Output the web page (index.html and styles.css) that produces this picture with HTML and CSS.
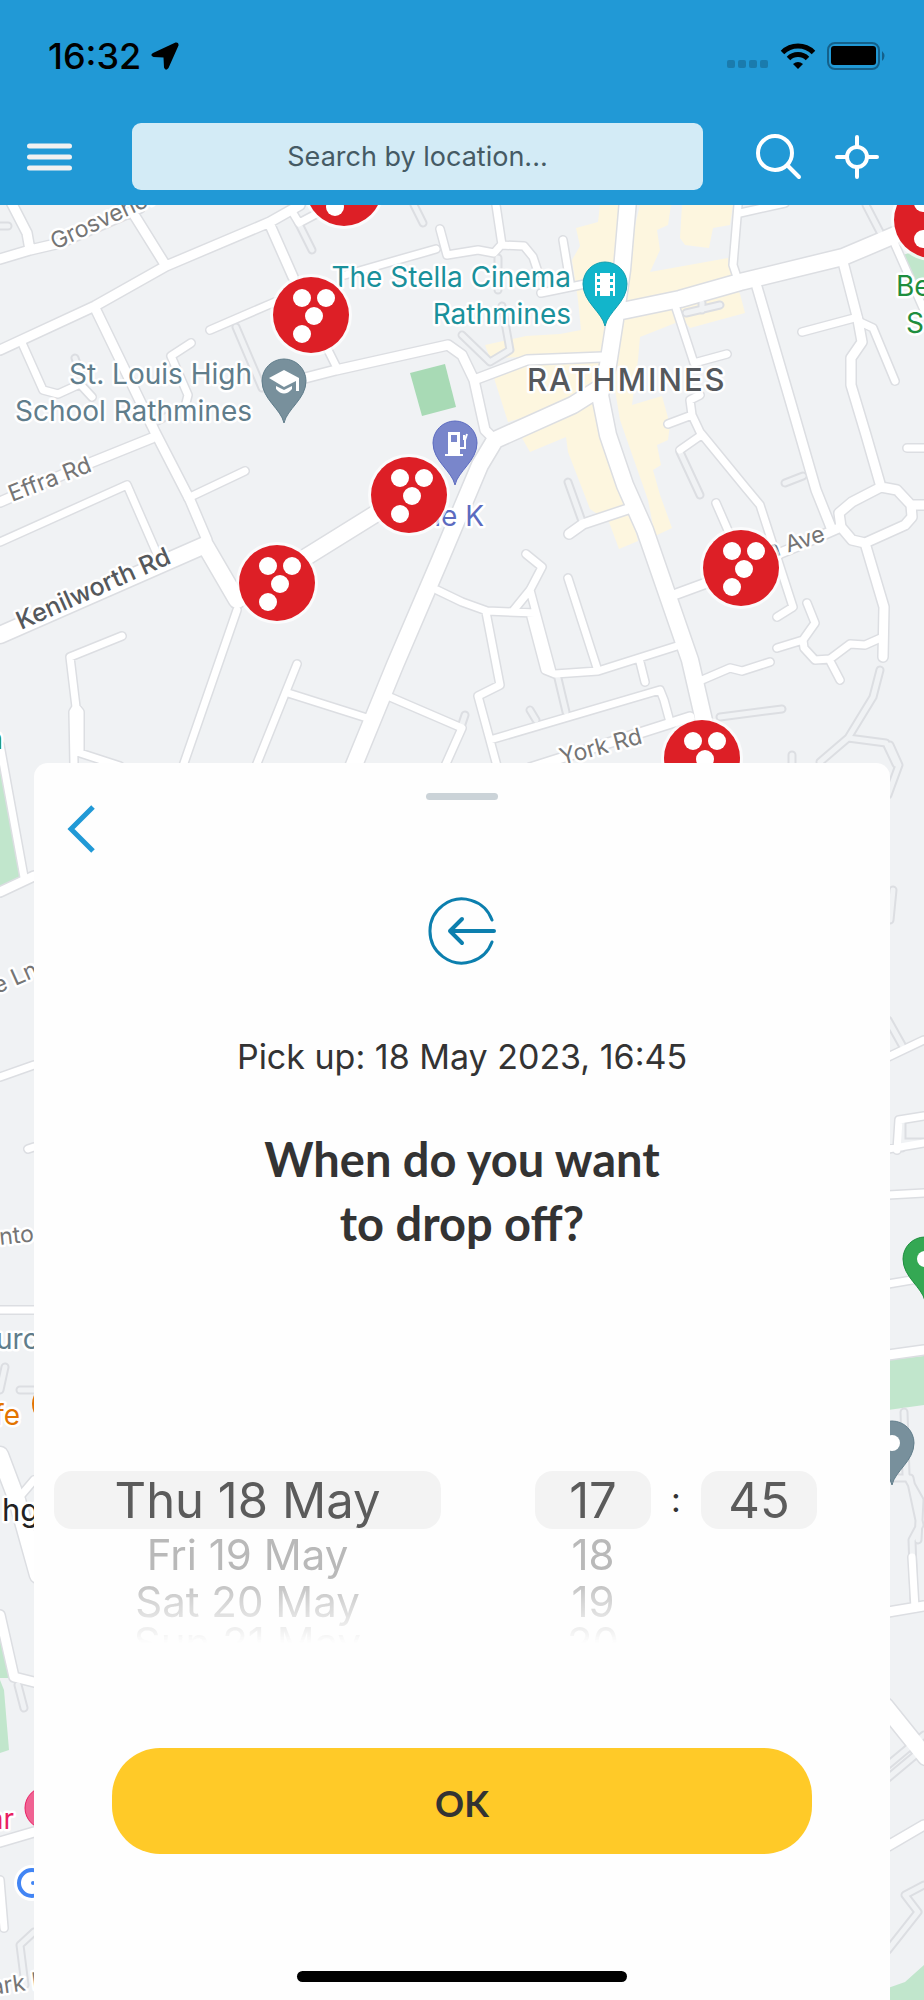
FILE: index.html
```html
<!DOCTYPE html>
<html lang="en">
<head>
    <meta charset="UTF-8">
    <meta name="viewport" content="width=device-width, initial-scale=1.0">
    <title>Drop off time</title>
    <link rel="stylesheet" href="styles.css">
</head>
<body>
    <header class="header">
        <div class="status">
            <span class="clock">16:32</span>
            <svg class="location" width="28" height="28" viewBox="0 0 28 28"><path d="M24.500.500 2 11Q-1.500 13.500 2.500 15L12.500 15.500 13 25.500Q14.500 29.500 17.500 26L27.500 3.500Q28 0 24.500.500z"/></svg>
            <svg class="signal" width="42" height="8" viewBox="0 0 42 8"><g fill="#1a7bad"><rect width="8" height="8" rx="2"/><rect x="11" width="8" height="8" rx="2"/><rect x="22" width="8" height="8" rx="2"/><rect x="33" width="8" height="8" rx="2"/></g></svg>
            <svg class="wifi" width="36" height="26" viewBox="0 0 36 26"><g fill="none" stroke="#000" stroke-width="5"><path d="M2.500 9.500a22 22 0 0 1 31 0"/><path d="M8.500 15.500a13.500 13.500 0 0 1 19 0"/></g><path d="M18 26l-5-5q5-4 10 0z"/></svg>
            <svg class="battery" width="59" height="28" viewBox="0 0 59 28"><rect x="1" y="1" width="51" height="26" rx="7" fill="none" stroke="#14608a" stroke-width="2"/><rect x="4" y="4" width="45" height="19" rx="3"/><path d="M55 9q5 5 0 10z" fill="#14608a"/></svg>
        </div>
        <div class="toolbar">
            <button type="button" class="icon-btn" aria-label="Menu">
                <svg width="45" height="28" viewBox="0 0 45 28"><path d="M2.500 3h40M2.500 14h40M2.500 25h40" stroke="#f1f1f1" stroke-width="5" stroke-linecap="round"/></svg>
            </button>
            <input type="text" class="search" placeholder="Search by location..." aria-label="Search by location">
            <button type="button" class="icon-btn" aria-label="Search">
                <svg width="46" height="46" viewBox="0 0 46 46"><g fill="none" stroke="#fff" stroke-width="4" stroke-linecap="round"><circle cx="19" cy="19" r="17"/><path d="M31.500 31.500 43 43"/></g></svg>
            </button>
            <button type="button" class="icon-btn" aria-label="My location">
                <svg width="46" height="46" viewBox="0 0 46 46"><g fill="none" stroke="#fff" stroke-width="4" stroke-linecap="round"><circle cx="23" cy="23" r="10"/><path d="M23 3v9M23 34v9M3 23h9M34 23h9"/></g></svg>
            </button>
        </div>
    </header>

    <main class="stage">
        <svg class="map" viewBox="0 205 924 1795" preserveAspectRatio="xMidYMin slice" role="img" aria-label="Map of Rathmines">
            <defs>
                <path id="pin" d="M0 42C-3 28-22 18-22 0A22 22 0 1 1 22 0C22 18 3 28 0 42z"/>
                <g id="station">
                    <circle r="41" fill="#fff" opacity=".7"/>
                    <circle r="38" fill="#dd1f26"/>
                    <g fill="#fff"><circle cx="-9" cy="-17" r="9"/><circle cx="15" cy="-17" r="9"/><circle cx="3" cy="1" r="9"/><circle cx="-9" cy="19" r="9"/></g>
                </g>
                <path id="lanes" d="M298 222 312 250M236 327 262 388M414 205 423 223M498 258V290M502 306 510 350 490 362 462 335M866 205 880 232M686 313 720 305M702 303V310M785 483 803 476M680 452 700 495M568 482 583 524M557 674 566 712M530 710 536 720M720 717 782 709M880 670 873 697 848 738 820 762M848 738 886 743 896 764M792 755V764M75 358 80 372M150 425 175 412M0 226H8M18 1685 24 1708M34 1932 20 1945 25 1985M5 1367 0 1390M20 1390H34M890 745 899 765 888 795M893 890 890 920M888 1020 902 1045M904 1412 906 1475 920 1500 918 1540M888 1478H910L920 1525 912 1540 914 1600M888 1765 924 1735M888 1778 924 1748M888 1950 918 1912 905 1895 924 1885M902 1122V1148M900 1142H924M465 715 460 730"/>
                <path id="streets" d="M22 343 43 390 58 394 80 384 92 397M191 343 171 356 188 395 186 403M210 330 275 302M293 213 299 223 318 213M345 275 436 249M440 229 447 255 478 250 494 253 501 245 524 246 533 257 538 272M496 205 502 245M541 293 585 284M563 240 570 282M328 350 338 370M188 498 245 471M0 542 127 485 158 556M122 636 70 657 76 707 73 712 74 764M76 707 80 712V753L120 766M237 610 183 766M297 664 256 766M288 693 367 718M390 697 462 728 445 766M437 590 462 602 487 611 535 613M526 554 542 567 530 590 513 611M530 590 552 672M530 613 545 670 555 674 598 671 677 646M568 578 598 671M640 662 645 682M486 612 500 685 478 696 497 766M490 740 660 690 664 700 670 722M702 680 730 668 742 671 770 662M716 503 730 535M807 603 815 623 803 640 804 648 815 660 830 659 850 644 865 645 883 637M777 648 803 640M829 659 840 680M858 317 802 332M860 322 873 328 895 381M893 240 924 310M676 308 694 363 727 354M700 395 690 400 692 415 700 432 745 487 760 505 793 607 777 617M692 415 668 424M700 436 680 450M740 213 785 203M738 205 733 265 738 280M907 448H924M24 877 0 745M0 1077 34 1065M28 1149 34 1147M0 1310H34M17 1500 34 1480M0 1880 4 1928M888 1057 924 1040M897 1150 899 1120 924 1116M888 1149 924 1143M888 1195 924 1193M888 1284 924 1278M912 1557 915 1608"/>
                <path id="roads" d="M10 200 27 233 30 250M0 259 30 250 60 243 140 208M133 213 166 266M0 350 95 306 166 266 270 222 300 205M95 308 155 432 190 500 207 540M270 225 293 277M0 502 85 465 152 438M305 378 336 370 448 345 462 355 474 380 485 430 492 437M474 380 527 360 603 357M757 287 790 400 816 490 832 530M843 262 858 320 862 342 851 358V385L866 435 881 487M839 513 852 502 881 487 897 490 911 505 912 517 905 525 865 543 852 540 841 527zM911 505H924M865 543 884 607 883 657M569 534 583 524 628 509M671 596 720 578 800 545 841 527M530 768 690 717M0 892 34 876M0 1615 14 1677 34 1682M0 1842 34 1832M888 1355 924 1350M888 1612 924 1606M888 1846 924 1825"/>
                <path id="avenues" d="M0 635 205 545 237 600 385 508M617 312 680 299 740 282 843 257 895 235 924 225M628 200 622 270 615 320 608 365 600 395 608 435 625 485 645 530 690 660 705 725M600 388 573 405 495 440 480 465 440 560 395 665 352 770M0 1455 17 1500 38 1575M885 1706 926 1757"/>
            </defs>

            <rect y="205" width="924" height="1795" fill="#f0f2f4"/>
            <!-- commercial blocks -->
            <path fill="#fdf6df" d="M600 205 598 222 576 228 580 246 572 260 578 300 581 330 560 334 526 336 485 345 490 358 560 356 603 357 640 205zM494 378 540 360 603 358 598 395 508 422zM522 438 598 400 612 440 638 541 619 549 609 522 590 509 568 452 566 437 530 452zM638 205H671L668 225 657 230 660 250 650 272 728 258 732 280 740 294 745 313 690 328 683 320 640 337 638 360 632 405 662 396 670 425 668 440 657 445 661 465 653 470 660 495 672 528 655 536 648 500 620 420 600 300zM682 205H733L730 225 713 228 709 248 685 245 680 238z"/>
            <!-- parks -->
            <path fill="#a8dab5" d="M410 373 445 364 456 407 422 416z"/>
            <path fill="#c1e6cc" d="M903 255 924 248V280H915zM0 765 20 877 0 886zM0 1635 9 1678 0 1678zM0 1680 4 1690 9 1750 0 1753zM888 1360 924 1356V1405L888 1410zM888 1988 905 1982 924 1965V2000H888z"/>

            <use href="#lanes" class="line casing lane"/>
            <use href="#streets" class="line casing street"/>
            <use href="#roads" class="line casing road"/>
            <use href="#avenues" class="line casing avenue"/>
            <use href="#lanes" class="line fill-lane"/>
            <use href="#streets" class="line fill-street"/>
            <use href="#roads" class="line fill-road"/>
            <use href="#avenues" class="line fill-avenue"/>

            <g class="labels">
                <text class="poi teal" x="571" y="287" text-anchor="end">The Stella Cinema</text>
                <text class="poi teal" x="571" y="324" text-anchor="end">Rathmines</text>
                <text class="poi slate" x="252" y="384" text-anchor="end">St. Louis High</text>
                <text class="poi slate" x="252" y="421" text-anchor="end">School Rathmines</text>
                <text class="poi green" x="896" y="296">Be</text>
                <text class="poi green" x="906" y="333">S</text>
                <text class="poi green" x="3" y="749" text-anchor="end">n</text>
                <text class="poi indigo" x="484" y="526" text-anchor="end">le K</text>
                <text class="district" x="527" y="391">RATHMINES</text>
                <text class="street-name" transform="translate(55 250) rotate(-25)">Grosvenor</text>
                <text class="street-name" transform="translate(12 502) rotate(-21)">Effra Rd</text>
                <text class="main-name" transform="translate(21 630) rotate(-24)">Kenilworth Rd</text>
                <text class="street-name" transform="translate(562 765) rotate(-15)">York Rd</text>
                <text class="street-name" transform="translate(769 559) rotate(-18)">n Ave</text>
                <text class="street-name" transform="translate(-3 994) rotate(-24)">e Ln</text>
                <text class="street-name" transform="translate(0 1245) rotate(-6)">nto</text>
                <text class="poi slate" x="-4" y="1349">urch</text>
                <text class="poi orange" x="20" y="1425" text-anchor="end">fe</text>
                <text class="town" x="2" y="1521">hg</text>
                <text class="poi pink" x="14" y="1829" text-anchor="end">ar</text>
                <text class="street-name" transform="translate(-8 1995) rotate(-8)">ark R</text>
            </g>

            <g transform="translate(605 284)">
                <use href="#pin" fill="#12b5cb" stroke="#129eaf"/>
                <path fill="#fff" d="M-10-11h2v3h3v-3H5v3h3v-3h2v23H8V9H5v3H-5V9h-3v3h-2z"/>
                <path stroke="#12b5cb" stroke-width="3" stroke-dasharray="3 3" d="M-6.500-5V9M6.500-5V9"/>
            </g>
            <g transform="translate(284 381)">
                <use href="#pin" fill="#78909c" stroke="#607d8b"/>
                <path fill="#fff" d="M0-11 15-3V10h-3V0L0 6-15-3zM-8 5 0 9 8 5V8Q0 17-8 8z"/>
            </g>
            <g transform="translate(455 443)">
                <use href="#pin" fill="#7986cb" stroke="#5c6bc0"/>
                <path fill="#fff" fill-rule="evenodd" d="M-7-11H5V11H8V13H-10V11H-7zM-4-8V-1H2V-8z"/>
                <path fill="none" stroke="#fff" stroke-width="2" d="M5 5h5V-3L12-9M9-8v5"/>
            </g>
            <g transform="translate(925 1259)">
                <use href="#pin" fill="#34a853" stroke="#1e8e3e"/>
                <circle r="8" fill="#fff"/>
            </g>
            <g transform="translate(892 1443)">
                <use href="#pin" fill="#78909c" stroke="#607d8b"/>
                <circle r="8" fill="#fff"/>
            </g>
            <circle cx="53" cy="1404" r="21" fill="#e37400"/>
            <circle cx="46" cy="1808" r="21" fill="#f06292" stroke="#e91e63"/>
            <circle cx="32" cy="1883" r="18" fill="#fff"/>
            <circle cx="32" cy="1883" r="13" fill="none" stroke="#4285f4" stroke-width="4"/>
            <circle cx="33" cy="1883" r="2" fill="#4285f4"/>

            <use href="#station" x="344" y="188"/>
            <use href="#station" x="311" y="315"/>
            <use href="#station" x="409" y="495"/>
            <use href="#station" x="277" y="583"/>
            <use href="#station" x="741" y="568"/>
            <use href="#station" x="702" y="758"/>
            <use href="#station" x="932" y="220"/>
        </svg>

        <form class="sheet">
            <div class="handle"></div>
            <button type="button" class="back" aria-label="Back">
                <svg width="28" height="48" viewBox="0 0 28 48"><path d="M26 2 4 24l22 22" fill="none" stroke="#2199d6" stroke-width="5"/></svg>
            </button>
            <svg class="return" width="68" height="68" viewBox="0 0 68 68"><g fill="none" stroke="#0c7fae" stroke-width="3" stroke-linecap="round" stroke-linejoin="round"><path d="M64 23a32 32 0 1 0 0 22"/><path d="M66 34H22M34 22 22 34l12 12" stroke-width="4"/></g></svg>
            <p class="pickup">Pick up: 18 May 2023, 16:45</p>
            <h1>When do you want<br>to drop off?</h1>

            <div class="picker">
                <div class="wheel date">
                    <select class="current" aria-label="Date">
                        <option>Thu 18 May</option>
                        <option>Fri 19 May</option>
                        <option>Sat 20 May</option>
                        <option>Sun 21 May</option>
                    </select>
                    <button type="button" class="next">Fri 19 May</button>
                    <button type="button" class="later">Sat 20 May</button>
                    <button type="button" class="last">Sun 21 May</button>
                </div>
                <div class="wheel hour">
                    <select class="current" aria-label="Hour">
                        <option>17</option>
                        <option>18</option>
                        <option>19</option>
                        <option>20</option>
                    </select>
                    <button type="button" class="next">18</button>
                    <button type="button" class="later">19</button>
                    <button type="button" class="last">20</button>
                </div>
                <span class="colon">:</span>
                <div class="wheel minute">
                    <select class="current" aria-label="Minute">
                        <option>45</option>
                    </select>
                </div>
            </div>

            <button type="submit" class="ok">OK</button>
            <div class="home-bar"></div>
        </form>
    </main>
</body>
</html>
```
FILE: styles.css
```css
* {
    box-sizing: border-box;
}
body {
    margin: 0;
    min-height: 100vh;
    display: flex;
    flex-direction: column;
    font-family: Inter, "Liberation Sans", sans-serif;
    color: #333;
    background-color: #f0f2f4;
}
button, input, select {
    font-family: inherit;
    color: inherit;
    border: none;
    padding: 0;
    margin: 0;
    background: none;
}
button {
    cursor: pointer;
}
svg {
    display: block;
}

/* header */
.header {
    background-color: #2199d6;
}
.status {
    display: flex;
    align-items: center;
    height: 108px;
    padding: 4px 38px 0 48px;
    color: #000;
}
.clock {
    font-size: 36px;
    font-weight: 500;
    line-height: 40px;
}
.location {
    margin-left: 10px;
}
.signal {
    margin-left: auto;
    margin-top: 16px;
}
.wifi {
    margin-left: 11px;
}
.battery {
    margin-left: 11px;
}
.toolbar {
    display: flex;
    align-items: center;
    height: 97px;
    padding: 0 44px 0 27px;
}
.search {
    flex: 1;
    min-width: 0;
    height: 67px;
    margin: 0 53px 0 60px;
    border-radius: 9px;
    background-color: #d3ebf6;
    font-size: 27px;
    text-align: center;
}
.search::placeholder {
    color: #455a64;
    opacity: 1;
}
.icon-btn + .icon-btn {
    margin-left: 32px;
}

/* map and sheet share one cell */
.stage {
    flex: 1;
    display: grid;
}
.map, .sheet {
    grid-area: 1 / 1;
}
.map {
    width: 100%;
    height: 100%;
}
.line {
    fill: none;
    stroke: #fff;
    stroke-linecap: round;
    stroke-linejoin: round;
}
.casing {
    stroke: #dcdee2;
}
.lane {
    stroke-width: 9px;
}
.street {
    stroke-width: 10px;
}
.road {
    stroke-width: 12px;
}
.avenue {
    stroke-width: 19px;
}
.fill-lane {
    stroke: #f0f2f4;
    stroke-width: 5px;
}
.fill-street {
    stroke-width: 7px;
}
.fill-road {
    stroke-width: 9px;
}
.fill-avenue {
    stroke-width: 16px;
}
.labels text {
    paint-order: stroke;
    stroke: #fff;
    stroke-width: 5px;
    stroke-linejoin: round;
}
.poi {
    font-size: 28px;
}
.teal {
    fill: #1a919b;
}
.slate {
    fill: #607d8b;
}
.green {
    fill: #1e8e3e;
}
.indigo {
    fill: #5c6bc0;
}
.orange {
    fill: #e37400;
}
.pink {
    fill: #e91e63;
}
.district {
    font-size: 31px;
    font-weight: 500;
    letter-spacing: 2px;
    fill: #55585c;
}
.street-name {
    font-size: 23px;
    fill: #757575;
}
.main-name {
    font-size: 25px;
    font-weight: 500;
    fill: #55585c;
}
.town {
    font-size: 31px;
    fill: #222;
}

/* bottom sheet */
.sheet {
    display: flex;
    flex-direction: column;
    align-items: center;
    margin: 558px 34px 0;
    padding-top: 30px;
    background-color: #fefefe;
    border-radius: 14px 14px 0 0;
}
.handle {
    width: 72px;
    height: 7px;
    border-radius: 4px;
    background-color: #cbd3d8;
}
.back {
    align-self: flex-start;
    margin: 5px 0 0 33px;
}
.return {
    margin-top: 44px;
}
.pickup {
    margin: 68px 0 0;
    font-size: 34px;
    line-height: 48px;
}
h1 {
    margin: 46px 0 0;
    font-family: Lato, sans-serif;
    font-size: 47px;
    font-weight: 700;
    line-height: 64px;
    text-align: center;
}
.picker {
    align-self: stretch;
    display: flex;
    align-items: flex-start;
    margin-top: 216px;
    padding: 0 73px 0 20px;
}
.wheel {
    display: flex;
    flex-direction: column;
    width: 116px;
    height: 172px;
    mask-image: linear-gradient(#000 60%, transparent);
}
.date {
    flex: 1;
    margin-right: 94px;
}
.current {
    appearance: none;
    width: 100%;
    height: 58px;
    border-radius: 18px;
    background-color: #f3f3f3;
    color: #5b5b5b;
    font-size: 49px;
    text-align: center;
    text-align-last: center;
}
.next, .later, .last {
    font-size: 42px;
    color: #b9b9b9;
}
.next {
    height: 52px;
    line-height: 52px;
}
.later {
    height: 42px;
    line-height: 42px;
}
.last {
    height: 20px;
    overflow: hidden;
    line-height: 40px;
}
.colon {
    width: 50px;
    line-height: 58px;
    font-size: 34px;
    text-align: center;
}
.ok {
    width: 700px;
    max-width: 82%;
    height: 106px;
    margin-top: 105px;
    padding-top: 4px;
    border-radius: 48px;
    background-color: #ffca28;
    font-family: Lato, sans-serif;
    font-size: 36px;
    font-weight: 700;
}
.home-bar {
    width: 330px;
    height: 11px;
    margin: auto 0 18px;
    border-radius: 6px;
    background-color: #000;
}
```
